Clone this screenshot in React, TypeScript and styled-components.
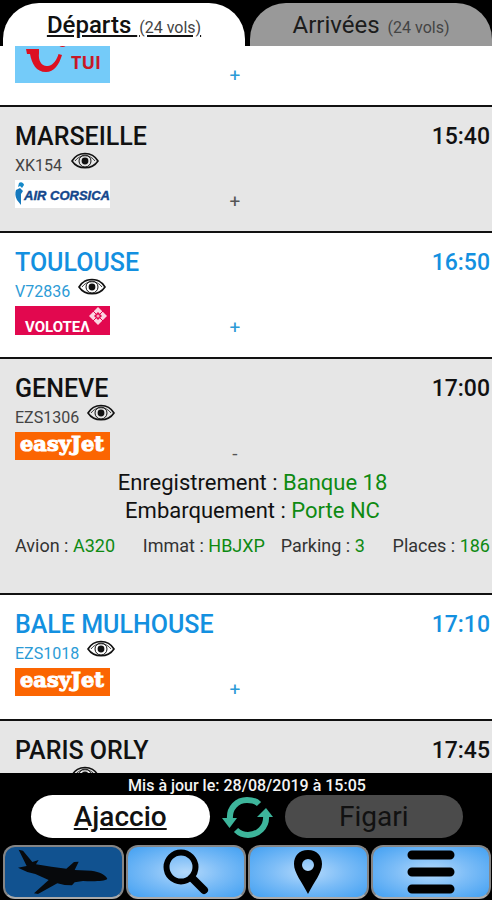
import React, { useLayoutEffect, useRef, useState } from 'react';
import styled, { createGlobalStyle } from 'styled-components';

type Airline = 'tui' | 'corsica' | 'volotea' | 'easyjet';

interface Flight {
  id: number;
  city?: string;
  code?: string;
  time?: string;
  airline?: Airline;
  checkin?: string;
  gate?: string;
  details?: { label: string; value: string }[];
}

interface StyledProps {
  $active?: boolean;
  $tinted?: boolean;
}

const flights: Flight[] = [
  { id: 1, airline: 'tui' },
  { id: 2, city: 'MARSEILLE', code: 'XK154', time: '15:40', airline: 'corsica' },
  { id: 3, city: 'TOULOUSE', code: 'V72836', time: '16:50', airline: 'volotea' },
  {
    id: 4,
    city: 'GENEVE',
    code: 'EZS1306',
    time: '17:00',
    airline: 'easyjet',
    checkin: 'Banque 18',
    gate: 'Porte NC',
    details: [
      { label: 'Avion', value: 'A320' },
      { label: 'Immat', value: 'HBJXP' },
      { label: 'Parking', value: '3' },
      { label: 'Places', value: '186' }
    ]
  },
  { id: 5, city: 'BALE MULHOUSE', code: 'EZS1018', time: '17:10', airline: 'easyjet' },
  { id: 6, city: 'PARIS ORLY', time: '17:45' }
];

const GlobalStyle = createGlobalStyle`
  * {
    box-sizing: border-box;
  }

  body {
    margin: 0;
    background: #000;
    font-family: Roboto, sans-serif;
  }

  button {
    font-family: inherit;
    padding: 0;
    border: none;
    cursor: pointer;
  }
`;

const Screen = styled.div`
  display: flex;
  flex-direction: column;
  height: 100vh;
  background: #000;
`;

const Tabs = styled.header`
  display: flex;
  gap: 5px;
  padding: 3px 0 0 3px;
`;

const Tab = styled.button<StyledProps>`
  flex: 1;
  height: 43px;
  border-radius: 36px 36px 0 0;
  background: ${props => props.$active ? '#fff' : '#999'};
  color: ${props => props.$active ? '#111' : '#1c1c1c'};
  font-size: 24px;
  font-weight: ${props => props.$active ? 500 : 400};
  text-decoration: ${props => props.$active ? 'underline' : 'none'};
`;

const TabCount = styled.span`
  margin-left: 2px;
  font-size: 16px;
  font-weight: 400;
  color: #444;
`;

const FlightList = styled.main`
  flex: 1;
  min-height: 0;
  overflow-y: auto;
  scrollbar-width: none;
  background: #fff;
`;

const FlightRow = styled.article<StyledProps>`
  padding: 15px 2px 19px 15px;
  border-bottom: 2px solid #111;
  background: ${props => props.$tinted ? '#e6e6e6' : '#fff'};
  color: ${props => props.$tinted ? '#111' : '#1390e0'};
`;

const RowTop = styled.div`
  display: flex;
  justify-content: space-between;
  align-items: center;
  height: 28px;
`;

const City = styled.h2`
  margin: 0;
  font-size: 25px;
  font-weight: 500;
`;

const Time = styled.time`
  font-size: 23px;
  font-weight: 500;
`;

const CodeLine = styled.div`
  display: flex;
  gap: 8px;
  height: 30px;
`;

const Code = styled.span<StyledProps>`
  min-width: 48px;
  font-size: 16px;
  line-height: 32px;
  color: ${props => props.$tinted ? '#444' : '#2c9bd6'};
`;

const WatchButton = styled.button`
  height: 22px;
  background: none;
  color: #111;

  svg {
    display: block;
  }
`;

const LogoLine = styled.div`
  display: grid;
  grid-template-columns: 1fr auto 1fr;
  align-items: start;
  min-height: 32px;

  svg {
    display: block;
    margin-bottom: 3px;
  }
`;

const Toggle = styled.button<StyledProps>`
  align-self: end;
  width: 20px;
  height: 20px;
  margin-right: 35px;
  background: none;
  color: ${props => props.$tinted ? '#555' : '#2c9bd6'};
  font-size: 19px;
  font-weight: 400;
  line-height: 20px;
`;

const StatusBlock = styled.div`
  padding: 5px 0 9px;
`;

const Status = styled.p`
  margin: 0;
  font-size: 22px;
  line-height: 28px;
  text-align: center;
`;

const Value = styled.span`
  color: #0e8a12;
`;

const Details = styled.div`
  display: grid;
  grid-template-columns: 128fr 138fr 112fr 97fr;
  padding-bottom: 16px;
  font-size: 18px;
  line-height: 24px;
  color: #333;
  white-space: nowrap;

  > span:last-child {
    justify-self: end;
  }
`;

const Footer = styled.footer`
  display: flex;
  flex-direction: column;
  padding: 3px 1px 1px 3px;
`;

const Updated = styled.p`
  margin: 0;
  font-size: 16px;
  font-weight: 500;
  line-height: 19px;
  text-align: center;
  color: #f4f4f4;
`;

const Airports = styled.div`
  display: flex;
  align-items: center;
  gap: 12px;
  height: 43px;
  padding: 0 28px;
  margin-bottom: 7px;
`;

const AirportButton = styled.button<StyledProps>`
  flex: 1;
  height: 43px;
  border-radius: 22px;
  background: ${props => props.$active ? '#fff' : '#4b4b4b'};
  color: #111;
  font-size: 28px;
  font-weight: ${props => props.$active ? 500 : 400};
  text-decoration: ${props => props.$active ? 'underline' : 'none'};
`;

const RefreshButton = styled.button`
  background: none;

  svg {
    display: block;
  }
`;

const NavBar = styled.nav`
  display: grid;
  grid-template-columns: repeat(4, 1fr);
  gap: 2px;
`;

const NavButton = styled.button<StyledProps>`
  display: flex;
  justify-content: center;
  align-items: center;
  height: 54px;
  border: 2px solid #858585;
  border-bottom-color: #aaa;
  border-radius: 12px;
  background: ${props => props.$active ? '#115290' : 'radial-gradient(ellipse, #b4d9fb 0%, #7dbdf7 45%, #42a0f2 100%)'};
`;

const EyeIcon = () => (
  <svg width="28" height="18" viewBox="0 0 28 18" fill="none" stroke="currentColor">
    <path d="M1 9C7 -1 21 -1 27 9C21 18 7 18 1 9Z" strokeWidth="1.6" />
    <path d="M4 9C9 2 19 2 24 9" strokeWidth="0.8" />
    <circle cx="14" cy="9" r="6" strokeWidth="1" />
    <circle cx="14" cy="9" r="3.4" fill="currentColor" stroke="none" />
  </svg>
);

const TuiLogo = () => (
  <svg width="95" height="42" viewBox="0 0 95 42">
    <rect width="95" height="42" fill="#74cbf9" />
    <path d="M11 8H24V12C23 20 27 26 33 25C39 24 42 18 43.500 13L47 14C44 24 39 31 31 31C21 31 17 23 15 13H12Z" fill="#dc1021" />
    <ellipse cx="47.500" cy="3" rx="3.500" ry="3" fill="#dc1021" />
    <text x="56" y="28" fill="#c81826" fontFamily="Open Sans, sans-serif" fontWeight="700" fontSize="18">TUI</text>
  </svg>
);

const CorsicaLogo = () => (
  <svg width="95" height="28" viewBox="0 0 95 28">
    <rect width="95" height="28" fill="#fff" />
    <path d="M4 3C6 1 9 3 9 5L7 8L5 6L3 7Z" fill="#1689c8" />
    <path d="M1 10L5 8L8 11L6 14V25L2 20C0 16 0 13 1 10Z" fill="#1478bd" />
    <text x="9" y="20" fill="#14478c" stroke="#14478c" strokeWidth="0.4" fontFamily="Liberation Sans, sans-serif" fontStyle="italic" fontWeight="700" fontSize="13">AIR CORSICA</text>
  </svg>
);

const VoloteaLogo = () => (
  <svg width="95" height="29" viewBox="0 0 95 29">
    <rect width="95" height="29" fill="#e2084f" />
    <text x="10" y="26" fill="#fff" fontFamily="Liberation Sans Narrow, Roboto, sans-serif" fontWeight="700" fontSize="15">VOLOTEΛ</text>
    <path d="M83 1L92 10L83 19L74 10Z" fill="#fbd5e1" />
    <path d="M83 6L87 10L83 14L79 10Z" fill="#e2084f" />
    <path d="M78 5L88 15M88 5L78 15" stroke="#e2084f" strokeWidth="1" />
    <circle cx="83" cy="10" r="1.500" fill="#f6a7c0" />
  </svg>
);

const EasyJetLogo = () => (
  <svg width="95" height="28" viewBox="0 0 95 28">
    <rect width="95" height="28" fill="#fb6502" />
    <text x="5" y="19" fill="#fff" stroke="#fff" strokeWidth="1" fontFamily="DejaVu Serif, serif" fontWeight="700" fontSize="21">easyJet</text>
  </svg>
);

const RefreshIcon = () => (
  <svg width="51" height="44" viewBox="0 0 51 44" fill="none" stroke="#3db59b" strokeWidth="6">
    <path d="M8 24C7 13 15 5 25 5C30 5 34 6 37 9" />
    <path d="M44 21C45 32 36 40 26 40C21 40 17 38 14 35" />
    <path d="M0 23H15L7.500 33Z" fill="#3db59b" stroke="none" />
    <path d="M35 22L44 13L51 22Z" fill="#3db59b" stroke="none" />
  </svg>
);

const PlaneIcon = () => (
  <svg width="90" height="46" viewBox="60 250 270 138">
    <path d="M62 252L75 255L103 289L122 283L114 296L160 303L205 309L228 289L242 288L230 313L280 315C305 318 324 328 328 340C320 348 280 347 255 346L230 350L222 359L200 358L178 353L120 385L108 383L152 343L112 325L88 319L60 306L86 301Z" fill="#07090c" />
  </svg>
);

const SearchIcon = () => (
  <svg width="46" height="46" viewBox="0 0 46 46" fill="none" stroke="#000">
    <circle cx="18" cy="18" r="14.500" strokeWidth="6" />
    <path d="M29 29L41 41" strokeWidth="8" strokeLinecap="round" />
  </svg>
);

const PinIcon = () => (
  <svg width="30" height="46" viewBox="0 0 30 46">
    <path fillRule="evenodd" d="M15 1C6 1 1 7 1 15C1 24 9 33 15 45C21 33 29 24 29 15C29 7 24 1 15 1ZM15 10A6 6 0 1 1 15 22A6 6 0 1 1 15 10Z" fill="#000" />
  </svg>
);

const MenuIcon = () => (
  <svg width="48" height="44" viewBox="0 0 48 44" stroke="#000" strokeWidth="9" strokeLinecap="round">
    <path d="M5 5H43M5 22H43M5 39H43" />
  </svg>
);

const logos: Record<Airline, React.FC> = {
  tui: TuiLogo,
  corsica: CorsicaLogo,
  volotea: VoloteaLogo,
  easyjet: EasyJetLogo
};

const navItems = [
  { id: 'flights', label: 'Vols', icon: PlaneIcon },
  { id: 'search', label: 'Rechercher', icon: SearchIcon },
  { id: 'map', label: 'Plan', icon: PinIcon },
  { id: 'menu', label: 'Menu', icon: MenuIcon }
];

const App: React.FC = () => {
  const [tab, setTab] = useState('departs');
  const [airport, setAirport] = useState('Ajaccio');
  const [page, setPage] = useState('flights');
  const [openFlight, setOpenFlight] = useState<number | null>(4);
  const listRef = useRef<HTMLElement>(null);

  // the list opens with the first flight partly scrolled away
  useLayoutEffect(() => {
    if (listRef.current) listRef.current.scrollTop = 20;
  }, []);

  return (
    <Screen>
      <GlobalStyle />
      <Tabs>
        <Tab $active={tab === 'departs'} onClick={() => setTab('departs')}>
          Départs <TabCount>(24 vols)</TabCount>
        </Tab>
        <Tab $active={tab === 'arrivees'} onClick={() => setTab('arrivees')}>
          Arrivées <TabCount>(24 vols)</TabCount>
        </Tab>
      </Tabs>

      <FlightList ref={listRef}>
        {flights.map((flight, i) => {
          const tinted = i % 2 === 1;
          const open = openFlight === flight.id;
          const Logo = flight.airline && logos[flight.airline];
          return (
            <FlightRow key={flight.id} $tinted={tinted}>
              {flight.city && (
                <>
                  <RowTop>
                    <City>{flight.city}</City>
                    <Time>{flight.time}</Time>
                  </RowTop>
                  <CodeLine>
                    <Code $tinted={tinted}>{flight.code}</Code>
                    <WatchButton aria-label="Suivre le vol"><EyeIcon /></WatchButton>
                  </CodeLine>
                </>
              )}
              {/* keeps the row's full height when no logo is known */}
              <LogoLine>
                {Logo && (
                  <>
                    <Logo />
                    <Toggle
                      $tinted={tinted}
                      aria-expanded={open}
                      onClick={() => setOpenFlight(open ? null : flight.id)}
                    >
                      {open ? '-' : '+'}
                    </Toggle>
                  </>
                )}
              </LogoLine>
              {open && flight.details && (
                <>
                  <StatusBlock>
                    <Status>Enregistrement : <Value>{flight.checkin}</Value></Status>
                    <Status>Embarquement : <Value>{flight.gate}</Value></Status>
                  </StatusBlock>
                  <Details>
                    {flight.details.map(item => (
                      <span key={item.label}>{item.label} : <Value>{item.value}</Value></span>
                    ))}
                  </Details>
                </>
              )}
            </FlightRow>
          );
        })}
      </FlightList>

      <Footer>
        <Updated>Mis à jour le: 28/08/2019 à 15:05</Updated>
        <Airports>
          <AirportButton $active={airport === 'Ajaccio'} onClick={() => setAirport('Ajaccio')}>
            Ajaccio
          </AirportButton>
          <RefreshButton aria-label="Actualiser"><RefreshIcon /></RefreshButton>
          <AirportButton $active={airport === 'Figari'} onClick={() => setAirport('Figari')}>
            Figari
          </AirportButton>
        </Airports>
        <NavBar>
          {navItems.map(({ id, label, icon: Icon }) => (
            <NavButton key={id} $active={page === id} aria-label={label} onClick={() => setPage(id)}>
              <Icon />
            </NavButton>
          ))}
        </NavBar>
      </Footer>
    </Screen>
  );
};

export default App;
